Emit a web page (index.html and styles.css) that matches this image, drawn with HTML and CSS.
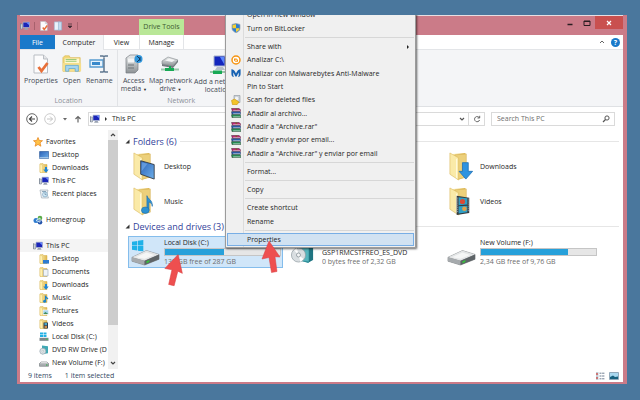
FILE: index.html
```html
<!DOCTYPE html>
<html lang="en">
<head>
<meta charset="utf-8">
<title>This PC</title>
<link rel="stylesheet" href="styles.css">
</head>
<body>
<svg class="defs" aria-hidden="true">
  <defs>
    <linearGradient id="gold" x1="0" x2="1"><stop offset="0" stop-color="#fbeeb0"/><stop offset="1" stop-color="#dfb64c"/></linearGradient>
    <linearGradient id="steel" x1="0" y1="0" x2="0" y2="1"><stop offset="0" stop-color="#e9ebec"/><stop offset="1" stop-color="#8d9295"/></linearGradient>
    <linearGradient id="sky" x1="0" y1="0" x2="1" y2="1"><stop offset="0" stop-color="#2b62b8"/><stop offset="1" stop-color="#6fb0ea"/></linearGradient>
  </defs>
  <symbol id="pc" viewBox="0 0 10 10"><path d="M.5 2v6M.5 3h2v5h-2z" fill="#c9d0da" stroke="#7c8694" stroke-width=".6"/><path d="M3 1.200h6.500v5.300H3z" fill="#1a25b8" stroke="#aeb8cc" stroke-width=".7"/><path d="M6.200 1.600h3v2.600z" fill="#6b8bff"/><path d="M5 6.900h2.600l1 1.800H4z" fill="#98a2b1"/></symbol>
  <symbol id="check-doc" viewBox="0 0 16 20"><path d="M1 1h9.500l4 4v14H1z" fill="#fcfcfd" stroke="#b9bdc3"/><path d="M10.500 1v4h4" fill="#e3e5e8" stroke="#b9bdc3"/><path d="M5.500 13l3 4 6-8" fill="none" stroke="#e8703a" stroke-width="2.800"/></symbol>
  <symbol id="page" viewBox="0 0 10 11"><path d="M1 1h6v9H1z" fill="#eaf3fb" stroke="#a3bdd6" stroke-width=".7"/><path d="M5.500 1H9v9H5.500z" fill="#c5dcef" stroke="#94b3cf" stroke-width=".7"/></symbol>
  <symbol id="open" viewBox="0 0 22 20"><path d="M1 3l2-2h5l1 2h11v15H1z" fill="#f2d777" stroke="#d7b54d" stroke-width=".7"/><path d="M3 4h16v5H3z" fill="#fff7d2"/><path d="M4 5h12M4 7h12" stroke="#8fc56d" stroke-width="1"/><path d="M1 9h20v9H1z" fill="#f6df8c"/><path d="M4 18v-6.500h14V18h-3.500v-3h-7v3z" fill="#a6d5f0" stroke="#5ba5cf" stroke-width=".8"/></symbol>
  <symbol id="rename" viewBox="0 0 20 18"><path d="M1 5h13v7H1z" fill="#e6f2fb" stroke="#569bd0" stroke-width="1.300"/><path d="M3 7h8v3H3z" fill="#3889cb"/><path d="M11 1h3l1 1 1-1h3M15 1.500v15M11 17h3l1-1 1 1h3" fill="none" stroke="#5e7790" stroke-width="1.500"/></symbol>
  <symbol id="access" viewBox="0 0 18 20"><path d="M1 4l4-3h8v15l-3 3H1z" fill="url(#steel)" stroke="#777d82" stroke-width=".7"/><path d="M3 4.500h6v4H3z" fill="#f3f4f5"/><path d="M3 11h6M3 14h6" stroke="#6e7478"/><circle cx="13.500" cy="5" r="4" fill="#3197dc"/><path d="M12 2l3 3-3 3M15 3v4" stroke="#173b60" fill="none"/></symbol>
  <symbol id="net-drive" viewBox="0 0 20 16"><path d="M2 5l6-4 10 3-5 6-11-2z" fill="url(#steel)" stroke="#82888c" stroke-width=".6"/><path d="M5 4.500l4-2 6 1.600-3 2z" fill="#f4f5f5"/><path d="M2 8l11 2 5-6v2l-5 6-11-2z" fill="#747b7f"/><path d="M1 13.500h18" stroke="#9ac7aa" stroke-width="2"/><path d="M5 12h9v3H5zM9 10h2v3H9z" fill="#17a955"/></symbol>
  <symbol id="net-place" viewBox="0 0 18 20"><path d="M5 1h11v10H5z" fill="#1326bd" stroke="#a6b1cc"/><path d="M11 2h4v7z" fill="#5a86ff"/><path d="M8 12h6l2 3H6z" fill="#b6bec8"/><path d="M1 17h16" stroke="#9ac7aa" stroke-width="2"/><path d="M4 15.500h9v3.500H4z" fill="#17a955"/></symbol>
  <symbol id="star" viewBox="0 0 10 10"><path d="M5 .5l1.300 3 3.200.2L7 5.800l.9 3.400L5 7.400 2.100 9.200 3 5.800.5 3.700l3.200-.2z" fill="#ffc247" stroke="#e88a23" stroke-width=".8"/></symbol>
  <symbol id="screen" viewBox="0 0 10 10"><path d="M.6 1.500h9v7h-9z" fill="url(#sky)" stroke="#315e9d" stroke-width=".7"/><path d="M.6 7.800h9" stroke="#bcd6ed"/></symbol>
  <symbol id="fold" viewBox="0 0 10 10"><path d="M1 .8l3-.3.6 1H8v8H1z" fill="url(#gold)" stroke="#d5ae48" stroke-width=".5"/><path d="M1 1l2.500 1.200V10L1 9z" fill="#fff0b0" stroke="#dcba5b" stroke-width=".4"/></symbol>
  <symbol id="fold-desktop" viewBox="0 0 10 10"><use href="#fold"/><path d="M4 6h6v3.600H4z" fill="#2c7bd0"/></symbol>
  <symbol id="fold-doc" viewBox="0 0 10 10"><use href="#fold"/><path d="M4.500 2.500h4.500v6.500H4.500z" fill="#eef3f7" stroke="#9ab" stroke-width=".6"/></symbol>
  <symbol id="fold-down" viewBox="0 0 10 10"><use href="#fold"/><path d="M6 4h2v2.500h1.700L7 9.800 4.300 6.500H6z" fill="#1e86d8"/></symbol>
  <symbol id="fold-music" viewBox="0 0 10 10"><use href="#fold"/><path d="M6.500 8.500V3.500L9 6" fill="none" stroke="#1c83cb" stroke-width="1.200"/><circle cx="5.600" cy="8.300" r="1.500" fill="#1c83cb"/></symbol>
  <symbol id="fold-pic" viewBox="0 0 10 10"><use href="#fold"/><path d="M4 4h5.600v4.500H4z" fill="#a9d5ed" stroke="#fff" stroke-width=".6"/><path d="M4.300 8l2-2 3 2z" fill="#3f8c5b"/></symbol>
  <symbol id="fold-video" viewBox="0 0 10 10"><use href="#fold"/><path d="M4.500 3.500h4.500v6H4.500z" fill="#2b3c4c"/><path d="M5.500 4h2.500v2.200H5.500z" fill="#49a6c9"/><path d="M5.500 6.800h2.500V9H5.500z" fill="#c98d4c"/></symbol>
  <symbol id="recent" viewBox="0 0 10 10"><path d="M1 1h8l-1 4 1.500 4H2.500z" fill="#e9eef2" stroke="#a4b0ba" stroke-width=".7"/><circle cx="6" cy="5.500" r="2.400" fill="#d5eaf7" stroke="#6c9dbd" stroke-width=".6"/><path d="M3 2.500h4M6 4v1.600h1.500" stroke="#527995" stroke-width=".6" fill="none"/></symbol>
  <symbol id="home" viewBox="0 0 10 10"><circle cx="3" cy="5.500" r="2.500" fill="#2e7bcf"/><circle cx="7" cy="3" r="2.300" fill="#5aab48"/><circle cx="7" cy="7.200" r="2.300" fill="#2453a9"/><path d="M3 5.500L7 3v4.200z" fill="none" stroke="#d4ecf8" stroke-width=".9"/></symbol>
  <symbol id="mini-drive" viewBox="0 0 10 10"><path d="M.5 5.500L2 4h6l1.500 1.500v2.800h-9z" fill="#a9aeb1" stroke="#71777b" stroke-width=".6"/><path d="M1 5.300L2.200 4.200h5.600l1.200 1.100z" fill="#f1f2f2"/><path d="M7 6.500h1.500v1H7z" fill="#24a83d"/></symbol>
  <symbol id="mini-win" viewBox="0 0 10 10"><path d="M1 .5h3v2H1zM4.500.5h3v2h-3zM1 3h3v2H1zM4.500 3h3v2h-3z" fill="#22b0e4"/><path d="M.5 5.800h9v3h-9z" fill="#7e868a"/><path d="M7 6.800h1.500v1H7z" fill="#35d04f"/></symbol>
  <symbol id="mini-dvd" viewBox="0 0 10 10"><path d="M3 .5l6 .8v7l-6 1z" fill="#41a9b5"/><circle cx="3.800" cy="6.200" r="3" fill="#dce3e7" stroke="#8f9ea6" stroke-width=".6"/><circle cx="3.800" cy="6.200" r=".9" fill="#fff" stroke="#899" stroke-width=".4"/></symbol>
  <symbol id="folder" viewBox="0 0 26 30"><path d="M4 2l13-1v25l-8 3z" fill="url(#gold)"/><path d="M6 3l12-1v24l-8 2z" fill="#ecd07b" stroke="#d0aa4b" stroke-width=".5"/><path d="M1 1l9 5v23l-9-6z" fill="#faeaa8" stroke="#d8b65a" stroke-width=".6"/><path d="M8 7v20" stroke="#fffbe4" stroke-width="1"/></symbol>
  <symbol id="big-desktop" viewBox="0 0 26 30"><use href="#folder"/><path d="M8 9l14 4v15L8 23z" fill="url(#sky)" stroke="#33383f" stroke-width=".9"/><path d="M9 10.500l6 1.700L9 20z" fill="#7cb0ec" opacity=".6"/></symbol>
  <symbol id="big-music" viewBox="0 0 26 30"><use href="#folder"/><path d="M14.500 24V9c1 4 6 4 5.500 11 0-3-2-4-3.500-4.500V24z" fill="#2c92d2" stroke="#1b6eae" stroke-width=".7"/><ellipse cx="12.800" cy="24" rx="4" ry="3.300" fill="#2c92d2" stroke="#1b6eae" stroke-width=".6"/></symbol>
  <symbol id="big-down" viewBox="0 0 26 30"><use href="#folder"/><path d="M14 11h6v9h4.500L17.500 28 10.500 20H14z" fill="#2e93e0" stroke="#1a6db4" stroke-width=".8"/></symbol>
  <symbol id="big-video" viewBox="0 0 26 30"><use href="#folder"/><path d="M8 9l13 2v16l-13 2z" fill="#343a40"/><path d="M10 10.500l9 1.200v6.500l-9 .6zM10 20l9-.6V26l-9 1.500z" fill="#2f9fc4"/><circle cx="14" cy="15" r="2.700" fill="#dc4a35"/><circle cx="16" cy="22.500" r="2.400" fill="#e0a24a"/><path d="M9 11v16M20 12v14" stroke="#c8cdd0" stroke-width=".8" stroke-dasharray="1 1"/></symbol>
  <symbol id="drive" viewBox="0 0 30 17"><path d="M1 8L16 1l13 4v5L14 16 1 12z" fill="#868b8e" stroke="#6c7174" stroke-width=".5"/><path d="M1 8L16 1l13 4-15 6.500z" fill="#e3e5e6"/><path d="M5 8l11-5 8 2.500-10 4z" fill="#f5f6f6"/><path d="M1 8l13 3.500V16L1 12z" fill="#a6aaad"/><path d="M14 11.500L29 5v5L14 16z" fill="#5e6467"/><path d="M16 12l3-1.200v2L16 14z" fill="#35c33b"/></symbol>
  <symbol id="winlogo" viewBox="0 0 12 12"><path d="M0 2l5.500-1v4.700H0zM6.200.9L12 0v5.700H6.200zM0 6.400h5.500V11L0 10.200zM6.200 6.400H12V12l-5.800-.9z" fill="#1fb1e8"/></symbol>
  <symbol id="dvd" viewBox="0 0 24 24"><path d="M8 2l13-2v19l-4 3-9-3z" fill="#2e929d"/><path d="M6 3l12-1v19L6 19z" fill="#55b5bd" stroke="#28808b" stroke-width=".6"/><path d="M18 2l4-1v18l-4 2z" fill="#207582"/><circle cx="7.500" cy="14" r="7" fill="#d9dee1" stroke="#919da3" stroke-width=".7"/><path d="M7.500 14L3 9l3-2zM7.500 14l5 4-3 3z" fill="#fff"/><circle cx="7.500" cy="14" r="2" fill="#f5f6f7" stroke="#7d898f" stroke-width=".7"/></symbol>
  <symbol id="shield" viewBox="0 0 10 10"><path d="M5 .4l4 1v4c0 2-2 3.500-4 4.300C3 8.900 1 7.400 1 5.400v-4z" fill="#2f7ed0" stroke="#9aa4ad" stroke-width=".7"/><path d="M5 1.200v4H1.500V2zM5 5.200h3.500c0 1.500-1.700 3-3.500 3.700z" fill="#f7d12f"/></symbol>
  <symbol id="avast" viewBox="0 0 10 10"><circle cx="5" cy="5" r="4" fill="#fff" stroke="#f59412" stroke-width="1.500"/><path d="M3 3.400h2.500L7 5v1.800H4.500L3 5.500z" fill="#f59412"/><circle cx="5" cy="5.200" r=".8" fill="#fff"/></symbol>
  <symbol id="mbam" viewBox="0 0 10 10"><path d="M.4 1.200C1.800 1 4 2.500 5 5.500 6 2.500 8.200 1 9.600 1.200V6C9.600 7.800 8.500 9 7 9 8 7.500 7.800 6 7.500 4.500L5.700 8.500H4.300L2.500 4.500C2.200 6 2 7.500 3 9 1.500 9 .4 7.800.4 6z" fill="#1762b3"/></symbol>
  <symbol id="scan" viewBox="0 0 10 10"><path d="M3 .5h6v7H3z" fill="#ccd2d8" stroke="#8b949d" stroke-width=".6"/><circle cx="5.600" cy="3.500" r="1.800" fill="#f3f5f6"/><path d="M.5 5.500l3-1.500 4.500 3-2 2.700H1.500z" fill="#f3c32a" stroke="#c49110" stroke-width=".6"/></symbol>
  <symbol id="rar" viewBox="0 0 10 10"><path d="M.5.500h7.500L9.800 2v1.300H1.500z" fill="#c22777" stroke="#3b1a2b" stroke-width=".5"/><path d="M.5 3.700h8.300l1 1v1.600H1z" fill="#2f62b3" stroke="#1b2540" stroke-width=".5"/><path d="M.5 6.700h8.300l1 1v1.900H1z" fill="#279358" stroke="#18331f" stroke-width=".5"/><path d="M4.600.500h1.600v1.500H4.600z" fill="#8b5a2a"/><path d="M2.200 2.600h7.300M2.200 5.700h7.300M2.200 8.800h7.300" stroke="#e9e9e9" stroke-width=".6"/></symbol>
  <symbol id="arrow" viewBox="0 0 20 32"><path d="M8 0L19 16l-5-.3L16 30.500l-5.500 1L8 16.500 1 18z" fill="#ee4f4f" stroke="#d93f42" stroke-width=".5"/></symbol>
</svg>

<main class="window">
  <header class="titlebar">
    <div class="quick">
      <svg class="i10"><use href="#pc"/></svg><i class="bar"></i>
      <svg class="i10"><use href="#check-doc"/></svg>
      <svg class="i10"><use href="#page"/></svg>
      <svg class="tiny" viewBox="0 0 6 6"><path d="M1 1h4M1 3h4L3 5z" fill="#3d2a30" stroke="#3d2a30" stroke-width=".7"/></svg><i class="bar"></i>
    </div>
    <div class="context-title">Drive Tools</div>
    <div class="caption">
      <button aria-label="Minimize"><svg viewBox="0 0 8 8"><path d="M1.500 5.500h5" stroke="#2a1d20" stroke-width="1.500"/></svg></button>
      <button aria-label="Maximize"><svg viewBox="0 0 8 8"><path d="M1 2h6v4.500H1zM1 2.500h6" fill="none" stroke="#2a1d20"/></svg></button>
      <button class="close" aria-label="Close"><svg viewBox="0 0 8 8"><path d="M2 2l4 4M6 2L2 6" stroke="#fff" stroke-width="1.200"/></svg></button>
    </div>
  </header>

  <nav class="tabs">
    <button class="file">File</button>
    <button class="computer">Computer</button>
    <button class="view">View</button>
    <button class="manage">Manage</button>
    <div class="tab-tools">
      <svg class="tiny" viewBox="0 0 6 6"><path d="M1 4l2-2 2 2" fill="none" stroke="#666"/></svg>
      <button class="help" aria-label="Help">?</button>
    </div>
  </nav>

  <section class="ribbon">
    <div class="group location">
      <div class="tools">
        <button><svg><use href="#check-doc"/></svg>Properties</button>
        <button><svg><use href="#open"/></svg>Open</button>
        <button><svg><use href="#rename"/></svg>Rename</button>
      </div>
      <div class="group-name">Location</div>
    </div>
    <div class="group network">
      <div class="tools">
        <button><svg><use href="#access"/></svg>Access<br>media <small>▼</small></button>
        <button><svg><use href="#net-drive"/></svg>Map network<br>drive <small>▼</small></button>
        <button><svg><use href="#net-place"/></svg>Add a network<br>location</button>
      </div>
      <div class="group-name">Network</div>
    </div>
  </section>

  <div class="address-row">
    <button class="nav" aria-label="Back"><svg viewBox="0 0 12 12"><circle cx="6" cy="6" r="5.300" fill="none" stroke="#666"/><path d="M9 6H3.500M6 3.500L3.500 6 6 8.500" fill="none" stroke="#444" stroke-width="1.200"/></svg></button>
    <button class="nav" aria-label="Forward"><svg viewBox="0 0 12 12"><circle cx="6" cy="6" r="5.300" fill="none" stroke="#ccc"/><path d="M3 6h5.500M6 3.500L8.500 6 6 8.500" fill="none" stroke="#c4c4c4"/></svg></button>
    <svg class="tiny" viewBox="0 0 6 6"><path d="M1 2h4L3 4.500z" fill="#666"/></svg>
    <button class="nav up" aria-label="Up"><svg viewBox="0 0 8 8"><path d="M4 7.500V1.500M1.500 4L4 1.500 6.500 4" fill="none" stroke="#666" stroke-width="1.200"/></svg></button>
    <div class="address">
      <svg class="i10"><use href="#pc"/></svg>
      <svg class="tiny" viewBox="0 0 6 6"><path d="M2 1v4l2-2z" fill="#333"/></svg>
      <span>This PC</span>
      <button class="history" aria-label="Previous locations"><svg class="tiny" viewBox="0 0 6 6"><path d="M1 2l2 2 2-2" fill="none" stroke="#555" stroke-width="1.200"/></svg></button>
      <button class="refresh" aria-label="Refresh"><svg viewBox="0 0 8 8"><path d="M6.500 3A2.600 2.600 0 1 0 6.600 5M4.500 3h2.200V.8" fill="none" stroke="#666" stroke-width="1"/></svg></button>
    </div>
    <div class="search">
      <input type="text" aria-label="Search This PC" placeholder="Search This PC">
      <svg viewBox="0 0 8 8"><circle cx="5" cy="3" r="2.100" fill="none" stroke="#555"/><path d="M3.500 4.500L1 7" stroke="#555" stroke-width="1.200"/></svg>
    </div>
  </div>

  <div class="body">
    <aside class="sidebar">
      <ul class="tree">
        <li class="root"><svg><use href="#star"/></svg>Favorites</li>
        <li><svg><use href="#screen"/></svg>Desktop</li>
        <li><svg><use href="#fold-down"/></svg>Downloads</li>
        <li><svg><use href="#pc"/></svg>This PC</li>
        <li><svg><use href="#recent"/></svg>Recent places</li>
        <li class="root spaced"><svg><use href="#home"/></svg>Homegroup</li>
        <li class="root spaced current"><svg><use href="#pc"/></svg>This PC</li>
        <li><svg><use href="#fold-desktop"/></svg>Desktop</li>
        <li><svg><use href="#fold-doc"/></svg>Documents</li>
        <li><svg><use href="#fold-down"/></svg>Downloads</li>
        <li><svg><use href="#fold-music"/></svg>Music</li>
        <li><svg><use href="#fold-pic"/></svg>Pictures</li>
        <li><svg><use href="#fold-video"/></svg>Videos</li>
        <li><svg><use href="#mini-win"/></svg>Local Disk (C:)</li>
        <li><svg><use href="#mini-dvd"/></svg>DVD RW Drive (D</li>
        <li><svg><use href="#mini-drive"/></svg>New Volume (F:)</li>
      </ul>
      <div class="scroll">
        <svg class="tiny" viewBox="0 0 6 6"><path d="M1 4l2-2 2 2" fill="none" stroke="#444" stroke-width="1.200"/></svg>
        <div class="thumb"></div>
        <svg class="tiny" viewBox="0 0 6 6"><path d="M1 2l2 2 2-2" fill="none" stroke="#444" stroke-width="1.200"/></svg>
      </div>
    </aside>

    <section class="content">
      <h2><svg viewBox="0 0 5 5"><path d="M4.500.5v4h-4z" fill="#333"/></svg>Folders (6)</h2>
      <div class="tiles folders">
        <div class="tile"><svg class="big"><use href="#big-desktop"/></svg><span>Desktop</span></div>
        <div class="tile"></div>
        <div class="tile"><svg class="big"><use href="#big-down"/></svg><span>Downloads</span></div>
        <div class="tile"><svg class="big"><use href="#big-music"/></svg><span>Music</span></div>
        <div class="tile"></div>
        <div class="tile"><svg class="big"><use href="#big-video"/></svg><span>Videos</span></div>
      </div>
      <h2><svg viewBox="0 0 5 5"><path d="M4.500.5v4h-4z" fill="#333"/></svg>Devices and drives (3)</h2>
      <div class="tiles drives">
        <div class="tile selected">
          <svg class="big" viewBox="0 0 30 30"><use href="#winlogo" x="1" y="2" width="12" height="12"/><use href="#drive" x="0" y="12" width="30" height="17"/></svg>
          <div class="info"><b>Local Disk (C:)</b><div class="meter"><i style="width:51%"></i></div><em>138 GB free of 287 GB</em></div>
        </div>
        <div class="tile">
          <svg class="big" viewBox="0 0 30 30"><use href="#dvd" x="2" y="3" width="25" height="25"/></svg>
          <div class="info"><b>DVD RW Drive (D:)</b><b>GSP1RMCSTFREO_ES_DVD</b><em>0 bytes free of 2,32 GB</em></div>
        </div>
        <div class="tile">
          <svg class="big" viewBox="0 0 30 30"><use href="#drive" x="0" y="12" width="30" height="17"/></svg>
          <div class="info"><b>New Volume (F:)</b><div class="meter"><i style="width:76%"></i></div><em>2,34 GB free of 9,76 GB</em></div>
        </div>
      </div>
    </section>
  </div>

  <footer class="status">
    <span>9 items</span><span>1 item selected</span>
    <div class="views">
      <svg viewBox="0 0 10 8"><path d="M1 0h2.500v8H1z" fill="#c4ced8"/><path d="M1 1h2v2H1zM1 5h2v2H1z" fill="#c77"/><path d="M4.500 1.200H10M4.500 4H10M4.500 6.800H10" stroke="#5d6f86" stroke-width=".9" stroke-dasharray="2 .6"/></svg>
      <svg viewBox="0 0 10 8"><path d="M.5.5h9v7h-9z" fill="#a9d8ef" stroke="#92a9ba"/><path d="M1 7V5l3-1.500L6 5l3-.5V7z" fill="#16617e"/></svg>
    </div>
  </footer>

  <div class="menu" role="menu">
    <div class="items pair">
      <button>Open in new window</button>
      <button><svg><use href="#shield"/></svg>Turn on BitLocker</button>
    </div>
    <div class="items nine">
      <button>Share with<svg class="more" viewBox="0 0 6 6"><path d="M2 1v4l2-2z" fill="#222"/></svg></button>
      <button><svg><use href="#avast"/></svg>Analizar C:\</button>
      <button><svg><use href="#mbam"/></svg>Analizar con Malwarebytes Anti-Malware</button>
      <button>Pin to Start</button>
      <button><svg><use href="#scan"/></svg>Scan for deleted files</button>
      <button><svg><use href="#rar"/></svg>Añadir al archivo...</button>
      <button><svg><use href="#rar"/></svg>Añadir a "Archive.rar"</button>
      <button><svg><use href="#rar"/></svg>Añadir y enviar por email...</button>
      <button><svg><use href="#rar"/></svg>Añadir a "Archive.rar" y enviar por email</button>
    </div>
    <div class="items"><button>Format...</button></div>
    <div class="items"><button>Copy</button></div>
    <div class="items pair"><button>Create shortcut</button><button>Rename</button></div>
    <div class="items"><button class="hover">Properties</button></div>
  </div>

  <svg class="pointer first"><use href="#arrow"/></svg>
  <svg class="pointer second"><use href="#arrow"/></svg>
</main>
</body>
</html>
```
FILE: styles.css
```css
* { box-sizing: border-box; }

body {
  margin: 0;
  height: 100vh;
  padding: 15px 13px 16px 17px;
  background: #4a779d;
  color: #1e1e1e;
  font: 7px/9px "Open Sans", "Noto Sans", sans-serif;
}

button, input {
  font: inherit;
  color: inherit;
  background: none;
  border: 0;
  padding: 0;
  margin: 0;
}

svg { display: block; flex: none; }
.defs { position: absolute; width: 0; height: 0; }
.i10 { width: 10px; height: 10px; }
.tiny { width: 6px; height: 6px; }

.window {
  position: relative;
  display: flex;
  flex-direction: column;
  height: 100%;
  overflow: hidden;
  background: #fff;
  border: solid #cb7b88;
  border-width: 0 4px 2px 3px;
}

/* Title bar */
.titlebar {
  display: flex;
  flex: none;
  height: 20px;
  padding-left: 0;
  background: #cb7b88;
  border-top: 1px solid #e8dfe3;
}
.quick {
  display: flex;
  align-items: center;
  gap: 4px;
  width: 119px;
}
.bar { width: 1px; height: 8px; background: #a8616d; }
.context-title {
  align-self: flex-end;
  width: 45px;
  height: 16px;
  line-height: 16px;
  text-align: center;
  background: #b9e797;
  color: #3f5a31;
}
.caption { display: flex; margin-left: auto; }
.caption button {
  display: grid;
  place-items: center;
  width: 17px;
  height: 13px;
}
.caption svg { width: 8px; height: 8px; }
.caption .close { width: 28px; background: #c9504f; }

/* Ribbon */
.tabs {
  display: flex;
  flex: none;
  height: 15px;
  border-bottom: 1px solid #e3e5e8;
}
.tabs button { text-align: center; }
.tabs .file { width: 35px; background: #1979ca; color: #fff; }
.tabs .computer {
  width: 49px;
  height: 15px;
  background: #f4f5f7;
  border-right: 1px solid #e3e5e8;
}
.tabs .view { width: 35px; }
.tabs .manage { width: 45px; border: solid #e3e5e8; border-width: 0 1px; }
.tab-tools {
  display: flex;
  align-items: center;
  gap: 6px;
  margin-left: auto;
  padding-right: 3px;
}
.tabs .help {
  width: 9px;
  height: 9px;
  border-radius: 50%;
  background: #1979ca;
  color: #fff;
  font-weight: 700;
}

.ribbon {
  display: flex;
  flex: none;
  height: 57px;
  background: #f4f5f7;
  border-bottom: 1px solid #dfe1e4;
}
.group {
  display: flex;
  flex-direction: column;
  justify-content: space-between;
  padding: 4px 4px 1px;
}
.location { border-right: 1px solid #e1e3e6; }
.tools { display: flex; gap: 4px; color: #444a55; }
.network { padding-left: 3px; }
.network .tools { gap: 2px; }
.tools button { white-space: nowrap; line-height: 8px; }
.location button { padding-bottom: 8px; }
.tools svg { width: 20px; height: 20px; margin: 0 auto 3px; }
.tools small { font-size: 4px; color: #222; }
.group-name { text-align: center; color: #8a8f98; }

/* Address bar */
.address-row {
  display: flex;
  flex: none;
  align-items: center;
  gap: 6px;
  height: 23px;
  padding: 0 8px 0 6px;
}
.nav svg { width: 12px; height: 12px; }
.nav.up svg { width: 8px; height: 8px; }
.address, .search {
  display: flex;
  align-items: center;
  height: 14px;
  border: 1px solid #dadada;
}
.address { flex: 1; gap: 3px; padding-left: 1px; }
.history { margin-left: auto; }
.refresh {
  display: grid;
  place-items: center;
  width: 16px;
  height: 12px;
  border-left: 1px solid #dadada;
}
.refresh svg, .search svg { width: 8px; height: 8px; }
.search { width: 124px; padding: 0 4px 0 5px; }
.search input { flex: 1; min-width: 0; outline: 0; }
.search input::placeholder { color: #6d6d6d; opacity: 1; }

/* Main area */
.body { display: flex; flex: 1; min-height: 0; }
.sidebar { display: flex; flex: none; width: 98px; overflow: hidden; }
.tree {
  flex: 1;
  min-width: 0;
  margin: 0;
  padding: 5px 0 0;
  list-style: none;
}
.tree li {
  display: flex;
  align-items: center;
  gap: 3px;
  height: 13px;
  padding-left: 19px;
  overflow: hidden;
  white-space: nowrap;
}
.tree svg { width: 10px; height: 10px; }
.tree .root { padding-left: 13px; }
.tree .spaced { margin-top: 13px; }
.tree .current { background: #f4f4f4; }
.scroll {
  display: flex;
  flex-direction: column;
  align-items: center;
  width: 10px;
  padding: 2px 0 3px;
  background: #f1f1f1;
}
.thumb { width: 10px; height: 185px; margin: 2px 0 auto; background: #cdcdcd; }

.content { flex: 1; min-width: 0; padding: 5px 4px 0 7px; }
h2 {
  display: flex;
  align-items: center;
  gap: 3px;
  height: 13px;
  margin: 0;
  color: #33429a;
  font-size: 9px;
  font-weight: 400;
}
h2 svg { width: 5px; height: 5px; }
h2::after { content: ""; flex: 1; height: 1px; background: #e6e6e6; }
.tiles { display: grid; grid-template-columns: repeat(3, 155px); column-gap: 3px; padding-left: 3px; }
.folders { grid-auto-rows: 35px; padding: 1px 0 1px 3px; }
.drives { grid-auto-rows: 32px; padding-top: 3px; }
.tile { display: flex; align-items: center; gap: 4px; padding-left: 2px; border: 1px solid transparent; }
.big { width: 29px; height: 29px; }
.selected { background: #d0e6f9; border-color: #84bdec; }
.info { width: 117px; overflow: hidden; white-space: nowrap; }
.info b, .info em { display: block; font-weight: 400; font-style: normal; }
.info em { color: #6d6d6d; }
.meter { height: 8px; margin: 1px 0; background: #e6e6e6; border: 1px solid #c5c5c5; }
.meter i { display: block; height: 6px; background: #26a0da; }

.status {
  display: flex;
  flex: none;
  align-items: center;
  gap: 13px;
  height: 13px;
  padding: 0 4px 0 8px;
  color: #34495f;
}
.views { display: flex; gap: 4px; margin-left: auto; }
.views svg { width: 10px; height: 8px; }

/* Context menu over the window */
.menu {
  position: absolute;
  top: -8px;
  left: 205px;
  width: 191px;
  padding: 0 1px 1px;
  background: linear-gradient(90deg, #f0f0f0 17px, #dcdcdc 17px, #dcdcdc 18px, #f0f0f0 18px);
  border: 1px solid #9b9b9b;
  box-shadow: 1px 1px 2px #0009;
}
.items { display: flex; flex-direction: column; height: 13px; }
.pair { height: 27px; }
.nine { height: 120px; }
.items + .items { margin-top: 5px; position: relative; }
.items + .items::before {
  content: "";
  position: absolute;
  top: -3px;
  left: 18px;
  right: 0;
  height: 1px;
  background: #d7d7d7;
}
.items button {
  display: grid;
  grid-template-columns: 14px 1fr 8px;
  column-gap: 4px;
  align-items: center;
  flex: 1;
  min-height: 0;
  padding-left: 1px;
  text-align: left;
  white-space: nowrap;
  border: 1px solid transparent;
}
.items button::before { content: ""; grid-column: 1; grid-row: 1; }
.items svg { grid-column: 1; grid-row: 1; width: 10px; height: 10px; margin-left: 2px; }
.items .more { grid-column: 3; width: 6px; height: 6px; margin: 0; }
.items .hover { background: #d1e2f2; border-color: #78aee5; }

/* Red pointers over the window */
.pointer { position: absolute; width: 20px; height: 32px; }
.first { left: 144px; top: 239px; transform: rotate(22deg); }
.second { left: 241px; top: 226px; }
```
